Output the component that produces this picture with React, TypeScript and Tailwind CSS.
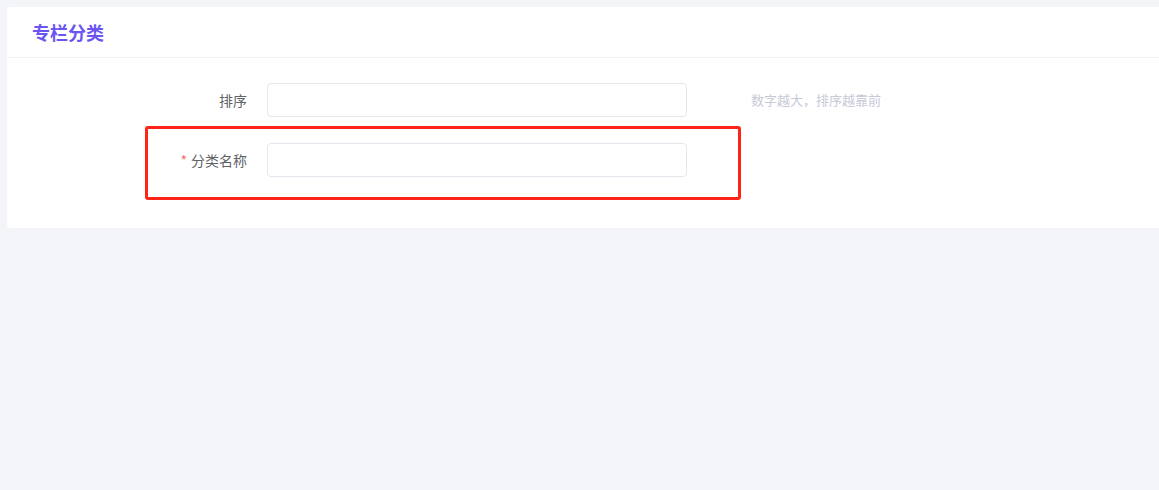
import React from 'react';

const font = { fontFamily: '"Noto Sans CJK SC", "Noto Sans", sans-serif' };

export default function App() {
  return (
    <div className="min-h-[490px] bg-[#f4f5f9] pl-[7px] pt-[7px]" style={font}>
      <div className="rounded-l-[4px] bg-white">
        {/* Header */}
        <div className="flex h-[51px] items-center border-b border-[#f0f1f5] px-[25px]">
          <span className="text-[18px] font-bold leading-none text-[#6a55f2]">专栏分类</span>
        </div>

        {/* Form */}
        <div className="pb-[51px] pt-[25px]">
          <div className="mb-[26px] flex items-center">
            <label className="w-[260px] pr-[20px] text-right text-[14px] text-[#606266]">排序</label>
            <input className="h-[34px] w-[420px] rounded-[4px] border border-[#e4e7ed] px-3 text-[14px] outline-none" />
            <span className="ml-[64px] text-[13px] text-[#c6c9d6]">数字越大，排序越靠前</span>
          </div>

          <div className="relative flex items-center">
            <label className="w-[260px] pr-[20px] text-right text-[14px] text-[#606266]">
              <span className="mr-[4px] text-[#f56c6c]">*</span>分类名称
            </label>
            <input className="h-[34px] w-[420px] rounded-[4px] border border-[#e4e7ed] px-3 text-[14px] outline-none" />
            {/* annotation box */}
            <div className="pointer-events-none absolute left-[138px] top-[-17px] h-[74px] w-[596px] rounded-[3px] border-[3px] border-[#ff2318]" />
          </div>
        </div>
      </div>
    </div>
  );
}
